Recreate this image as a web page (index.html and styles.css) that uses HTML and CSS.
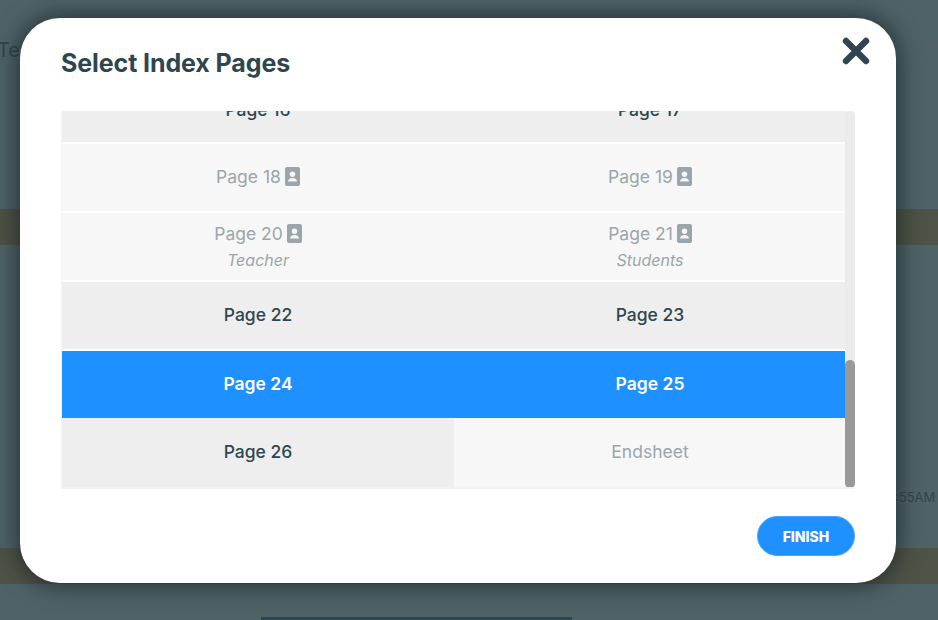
FILE: index.html
```html
<!DOCTYPE html>
<html lang="en">
<head>
<meta charset="utf-8">
<title>Select Index Pages</title>
<link rel="stylesheet" href="styles.css">
</head>
<body>
<div class="backdrop">
  <span class="bg-te">Tes</span>
  <span class="bg-avatar"></span>
  <div class="bg-strip bg-strip-a"></div>
  <div class="bg-strip bg-strip-b"></div>
  <span class="bg-time">8:55AM</span>
  <div class="bg-bar"></div>
</div>
<main class="modal">
  <header class="modal-head">
    <h1 class="title">Select Index Pages</h1>
    <button class="close" aria-label="Close">
      <svg width="28" height="28" viewBox="0 0 28 28"><path d="M4 4 L24 24 M24 4 L4 24" stroke="#2f4650" stroke-width="6.4" stroke-linecap="round" fill="none"/></svg>
    </button>
  </header>
  <div class="list">
    <div class="rows">
      <div class="row row-first"><div class="cell">Page 16</div><div class="cell">Page 17</div></div>
      <div class="row"><div class="cell off"><span class="line">Page 18 <svg class="badge" viewBox="0 0 15 19"><rect width="15" height="19" rx="2" fill="#9aa6ab"/><circle cx="7.5" cy="7.2" r="2.7" fill="#f6f6f6"/><path d="M3 14.5c0-2.4 2-3.6 4.5-3.6s4.500 1.200 4.500 3.600z" fill="#f6f6f6"/></svg></span></div><div class="cell off"><span class="line">Page 19 <svg class="badge" viewBox="0 0 15 19"><rect width="15" height="19" rx="2" fill="#9aa6ab"/><circle cx="7.5" cy="7.2" r="2.7" fill="#f6f6f6"/><path d="M3 14.500c0-2.400 2-3.600 4.500-3.600s4.500 1.200 4.500 3.600z" fill="#f6f6f6"/></svg></span></div></div>
      <div class="row"><div class="cell off stacked"><span class="line">Page 20 <svg class="badge" viewBox="0 0 15 19"><rect width="15" height="19" rx="2" fill="#9aa6ab"/><circle cx="7.5" cy="7.2" r="2.7" fill="#f6f6f6"/><path d="M3 14.500c0-2.400 2-3.600 4.500-3.600s4.500 1.200 4.500 3.600z" fill="#f6f6f6"/></svg></span><em class="tag">Teacher</em></div><div class="cell off stacked"><span class="line">Page 21 <svg class="badge" viewBox="0 0 15 19"><rect width="15" height="19" rx="2" fill="#9aa6ab"/><circle cx="7.5" cy="7.2" r="2.7" fill="#f6f6f6"/><path d="M3 14.500c0-2.400 2-3.600 4.500-3.600s4.500 1.200 4.500 3.600z" fill="#f6f6f6"/></svg></span><em class="tag">Students</em></div></div>
      <div class="row"><div class="cell">Page 22</div><div class="cell">Page 23</div></div>
      <div class="row row-active"><div class="cell active">Page 24</div><div class="cell active">Page 25</div></div>
      <div class="row row-last"><div class="cell">Page 26</div><div class="cell off">Endsheet</div></div>
    </div>
    <div class="track"><div class="thumb"></div></div>
  </div>
  <footer class="modal-foot"><button class="finish">FINISH</button></footer>
</main>
</body>
</html>
```
FILE: styles.css
```css
* { box-sizing: border-box; }
html, body { margin: 0; height: 100%; }
body {
  width: 938px; height: 620px; overflow: hidden; position: relative;
  background: #4f6367;
  font-family: Inter, Lato, sans-serif;
  color: #2f4650;
  padding: 18px 42px 37px 20px;
}
.backdrop { position: absolute; inset: 0; }
.bg-te { position: absolute; left: -3px; top: 38px; font-size: 20px; color: #2f4650; }
.bg-avatar { position: absolute; left: 935px; top: 15px; width: 32px; height: 32px; border-radius: 50%; border: 1px solid #3f6b62; }
.bg-strip { position: absolute; left: 0; width: 100%; height: 36px; background: #4e5347; }
.bg-strip-a { top: 209px; }
.bg-strip-b { top: 548px; }
.bg-time { position: absolute; left: 887px; top: 489px; font-size: 13px; color: #2f4650; }
.bg-bar { position: absolute; left: 261px; top: 617px; width: 311px; height: 3px; background: #2f4650; }
.modal {
  position: relative; width: 876px; height: 565px; background: #fff; border-radius: 40px;
  box-shadow: 0 0 22px 4px rgba(15, 25, 28, .6);
  padding: 0 41px;
  display: flex; flex-direction: column;
}
.modal-head { height: 93px; display: flex; justify-content: space-between; align-items: flex-start; }
.title { margin: 29px 0 0; font-size: 25px; line-height: 32px; font-weight: 700; letter-spacing: -.1px; color: #2f4650; }
.close { margin: 19px -15px 0 0; padding: 0; border: 0; background: none; width: 28px; height: 28px; }
.close svg { display: block; }
.list { height: 378px; display: flex; overflow: hidden; border-bottom: 2px solid #f2f2f2; border-left: 1px solid #f4f4f4; background: #fff; }
.rows { width: 784px; display: flex; flex-direction: column; }
.row { flex: 0 0 69px; display: flex; border-bottom: 2px solid #fff; }
.row-first { margin-top: -36px; }
.row-first .cell { padding: 2px 0 0; }
.row-active { flex-basis: 67px; border-bottom: 0; }
.row-last { flex-basis: 69px; border-bottom: 0; }
.cell { flex: 1 1 0; display: flex; flex-direction: column; align-items: center; justify-content: center; padding-bottom: 2px; background: #eee; font-size: 17.5px; font-weight: 450; color: #2f4650; }
.off { background: #f7f7f7; color: #9aa6ab; font-weight: 400; }
.active { background: #1e90ff; color: #fff; font-weight: 600; }
.line { display: inline-flex; align-items: center; gap: 4px; }
.stacked { justify-content: flex-start; padding: 10px 0 0; }
.badge { width: 15px; height: 19px; }
.tag { font-size: 16px; line-height: 20px; margin-top: 6px; }
.track { width: 10px; margin-left: -1px; background: #ebebeb; border-radius: 4px 4px 0 0; padding-top: 249px; position: relative; }
.thumb { height: 128px; border-radius: 5px; background: #999; }
.modal-foot { display: flex; justify-content: flex-end; padding-top: 27px; }
.finish { width: 98px; height: 40px; border-radius: 20px; border: 1px solid #4aa6ff; background: #1e90ff; color: #fff; font: 800 14px Inter, sans-serif; }
```
